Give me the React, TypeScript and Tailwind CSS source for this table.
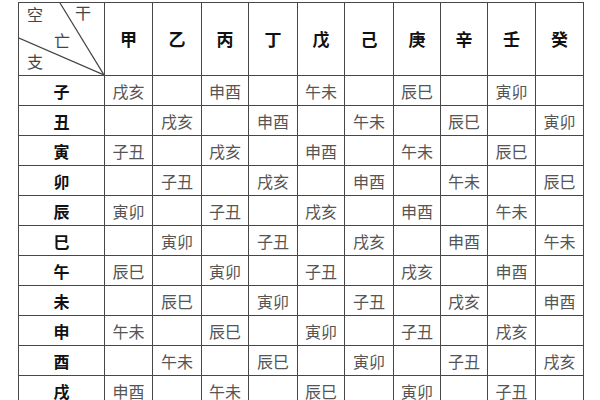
const stems = ["甲", "乙", "丙", "丁", "戊", "己", "庚", "辛", "壬", "癸"];

const rows: [string, string[]][] = [
  ["子", ["戌亥", "", "申酉", "", "午未", "", "辰巳", "", "寅卯", ""]],
  ["丑", ["", "戌亥", "", "申酉", "", "午未", "", "辰巳", "", "寅卯"]],
  ["寅", ["子丑", "", "戌亥", "", "申酉", "", "午未", "", "辰巳", ""]],
  ["卯", ["", "子丑", "", "戌亥", "", "申酉", "", "午未", "", "辰巳"]],
  ["辰", ["寅卯", "", "子丑", "", "戌亥", "", "申酉", "", "午未", ""]],
  ["巳", ["", "寅卯", "", "子丑", "", "戌亥", "", "申酉", "", "午未"]],
  ["午", ["辰巳", "", "寅卯", "", "子丑", "", "戌亥", "", "申酉", ""]],
  ["未", ["", "辰巳", "", "寅卯", "", "子丑", "", "戌亥", "", "申酉"]],
  ["申", ["午未", "", "辰巳", "", "寅卯", "", "子丑", "", "戌亥", ""]],
  ["酉", ["", "午未", "", "辰巳", "", "寅卯", "", "子丑", "", "戌亥"]],
  ["戌", ["申酉", "", "午未", "", "辰巳", "", "寅卯", "", "子丑", ""]],
  ["亥", ["", "申酉", "", "午未", "", "辰巳", "", "寅卯", "", "子丑"]],
];

const font = { fontFamily: '"Noto Sans CJK SC", "Noto Sans CJK JP", sans-serif' };

const App = () => {
  return (
    <div className="w-[600px] h-[400px] bg-white overflow-hidden pl-[18px] pt-[2px]" style={font}>
      <div className="grid w-max grid-cols-[85px_47px_48px_46px_48px_46px_48px_46px_46px_47px_47px] grid-rows-[72px_repeat(12,29px)] gap-px p-px bg-[#474747]">
        {/* corner cell: 空亡 / 干 / 支 with diagonals */}
        <div className="relative bg-white text-[16px] leading-none text-[#444] flex flex-col pt-[3px] pl-[8px]">
          <svg className="absolute inset-0" width="85" height="72">
            <line x1="41" y1="0" x2="85" y2="72" stroke="#444" strokeWidth="1.2" />
            <line x1="0" y1="35" x2="85" y2="72" stroke="#444" strokeWidth="1.2" />
          </svg>
          <div className="flex gap-[32px]">
            <span>空</span>
            <span className="-mt-[2px]">干</span>
          </div>
          <span className="mt-[10px] ml-[27px]">亡</span>
          <span className="mt-[5px]">支</span>
        </div>
        {stems.map((s) => (
          <div key={s} className="bg-white flex items-center justify-center text-[17px] font-bold text-[#111]">
            {s}
          </div>
        ))}
        {rows.map(([b, cells]) => (
          <>
            <div key={b} className="bg-white flex items-center justify-center text-[16px] font-bold text-[#111]">
              {b}
            </div>
            {cells.map((c, i) => (
              <div key={b + i} className="bg-white flex items-center justify-center text-[16px] text-[#555]">
                {c}
              </div>
            ))}
          </>
        ))}
      </div>
    </div>
  );
};

export default App;
